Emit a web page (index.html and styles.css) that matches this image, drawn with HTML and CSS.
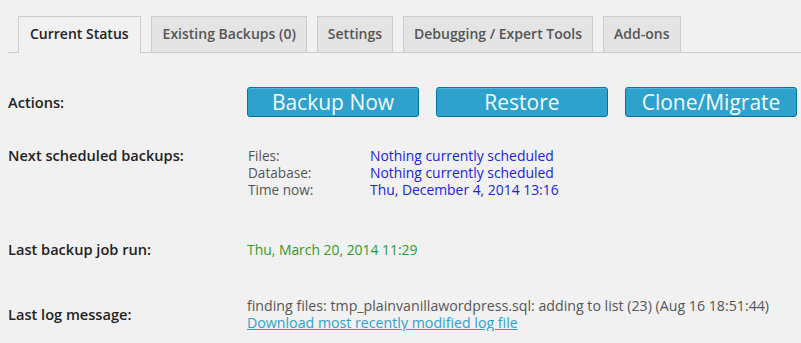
FILE: index.html
```html
<!DOCTYPE html>
<html>

<head>
    <title> UpdraftPlus Backup/Restore </title>
    <link rel="stylesheet" href="styles.css">
</head>

<body>
    <div class="tabBar">
        <a class="tab tabActive">Current Status</a>
        <a class="tab">Existing Backups (0)</a>
        <a class="tab">Settings</a>
        <a class="tab">Debugging / Expert Tools</a>
        <a class="tab">Add-ons</a>
    </div>

    <div class="statusTable">
        <div class="row rowActions">
            <div class="label">Actions:</div>
            <div class="value buttons">
                <button type="button" class="bigButton">Backup Now</button>
                <button type="button" class="bigButton">Restore</button>
                <button type="button" class="bigButton">Clone/Migrate</button>
            </div>
        </div>

        <div class="row rowSchedule">
            <div class="label">Next scheduled backups:</div>
            <div class="value schedule">
                <span class="schedKey">Files:</span>
                <span class="schedVal">Nothing currently scheduled</span>
                <span class="schedKey">Database:</span>
                <span class="schedVal">Nothing currently scheduled</span>
                <span class="schedKey">Time now:</span>
                <span class="schedVal">Thu, December 4, 2014 13:16</span>
            </div>
        </div>

        <div class="row rowLastRun">
            <div class="label">Last backup job run:</div>
            <div class="value lastRun">Thu, March 20, 2014 11:29</div>
        </div>

        <div class="row rowLog">
            <div class="label">Last log message:</div>
            <div class="value logText">
                finding files: tmp_plainvanillawordpress.sql: adding to list (23) (Aug 16 18:51:44)<br>
                <a href="#" class="logLink">Download most recently modified log file</a>
            </div>
        </div>
    </div>
</body>

</html>
```

FILE: styles.css
```css
html {
    font-family: "Open Sans", "Noto Sans", sans-serif;
}

body {
    margin: 0px;
    padding: 16px 0px 0px 8px;
    background-color: #f1f1f1;
    color: #444;
    font-size: 14px;
}

.tabBar {
    display: flex;
    gap: 10px;
    padding-left: 10px;
    border-bottom: 1px solid #ccc;
    height: 36px;
}

.tab {
    display: block;
    box-sizing: border-box;
    height: 36px;
    padding: 5px 10px;
    line-height: 24px;
    font-size: 14px;
    font-weight: 600;
    color: #555;
    background-color: #e4e4e4;
    border: 1px solid #ccc;
    border-bottom: none;
    text-decoration: none;
}

.tab:nth-child(2) {
    padding: 5px 10px 5px 11px;
}

.tabActive {
    height: 37px;
    padding: 5px 11px;
    color: #222;
    background-color: #f1f1f1;
}

.statusTable {
    display: flex;
    flex-direction: column;
}

.row {
    display: flex;
    align-items: center;
}

.label {
    width: 239px;
    flex-shrink: 0;
    font-size: 14.6px;
    font-weight: 600;
    color: #222;
    line-height: 17px;
}

.rowActions {
    margin-top: 34px;
}

.buttons {
    display: flex;
    gap: 17px;
}

.bigButton {
    box-sizing: border-box;
    width: 172px;
    height: 30px;
    padding: 0px;
    border: 1px solid #0074a2;
    border-radius: 3px;
    background-color: #2ea2cc;
    color: #f4fbfd;
    font-family: "Open Sans", "Noto Sans", sans-serif;
    font-size: 21px;
    line-height: 26px;
    box-shadow: inset 0 1px 0 rgba(120, 200, 230, 0.5);
}

.rowSchedule {
    align-items: flex-start;
    margin-top: 30px;
}

.schedule {
    display: grid;
    grid-template-columns: 122px auto;
    line-height: 17px;
    font-size: 13.6px;
    padding-left: 1px;
}

.schedKey {
    color: #555;
}

.schedVal {
    font-size: 13.9px;
    color: #2222dd;
}

.rowLastRun {
    margin-top: 43px;
}

.lastRun {
    color: #2f9a2f;
    font-size: 13.9px;
    line-height: 17px;
}

.rowLog {
    margin-top: 39px;
}

.logText {
    color: #555;
    font-size: 14.2px;
    line-height: 17px;
}

.logLink {
    color: #2ea2cc;
    text-decoration: underline;
}
```
